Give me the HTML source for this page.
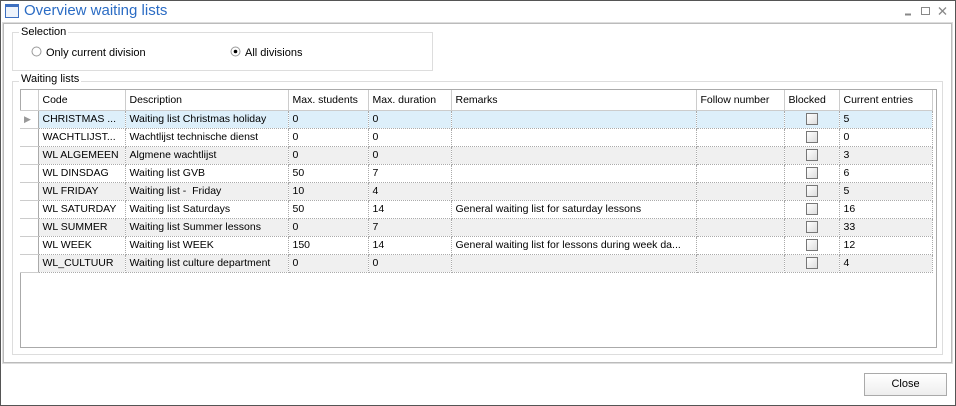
<!DOCTYPE html>
<html><head><style>
*{box-sizing:border-box;margin:0;padding:0}
body{width:956px;height:406px;background:#fff;font-family:"Liberation Sans",sans-serif;font-size:11px;color:#000;position:relative;overflow:hidden}
.win{position:absolute;left:0;top:0;width:956px;height:406px;border:1px solid #555}
.abs{position:absolute;white-space:nowrap}
.title{left:24px;top:2px;font-size:15px;color:#2b6cc4}
.panel{left:3px;top:23px;width:949px;height:340px;border:1px solid #bbb;outline:1px solid #ddd}
.grp{border:1px solid #ddd}
.lbl{background:#fff;padding:0 2px}
table{border-collapse:collapse;table-layout:fixed;position:absolute;left:20px;top:90px;font-size:10.5px}
td{height:18px;border-right:1px dotted #aaa;border-bottom:1px dotted #aaa;padding-left:4px;white-space:nowrap;overflow:hidden}
th{height:20px;font-weight:normal;text-align:left;padding-left:4px;border-right:1px solid #ccc;border-bottom:1px solid #ccc;white-space:nowrap;overflow:hidden}
td.ind{border-right:1px solid #aaa;border-bottom:1px solid #ccc}
tr.alt td{background:#f0f0f0}
tr.alt td.ind, tr td.ind{background:#fff}
tr.sel td{background:#ddeffa}
.cb{display:block;width:12px;height:12px;border:1px solid #777;background:linear-gradient(135deg,#fff,#ddd);margin-left:17px}
</style></head><body>
<div class="win"></div>
<svg class="abs" style="left:5px;top:4px" width="15" height="15"><rect x="0.5" y="0.5" width="13" height="13" fill="#eef3fb" stroke="#3d6fc0"/><rect x="1" y="1" width="12" height="2" fill="#3d6fc0"/></svg>
<div class="abs title">Overview waiting lists</div>
<svg class="abs" style="left:900px;top:4px" width="50" height="14" stroke="#888" fill="none"><line x1="5" y1="10.5" x2="11" y2="10.5" stroke-width="2"/><rect x="21.5" y="3.5" width="8" height="7"/><path d="M39 3.5l7 7M46 3.5l-7 7" stroke-width="1.3"/></svg>
<div class="abs panel"></div>
<div class="abs grp" style="left:12px;top:32px;width:421px;height:39px"></div>
<div class="abs lbl" style="left:19px;top:26px">Selection</div>
<svg class="abs" style="left:31px;top:46px" width="11" height="11"><circle cx="5.5" cy="5.5" r="4.5" fill="#fff" stroke="#999"/></svg>
<div class="abs" style="left:46px;top:47px">Only current division</div>
<svg class="abs" style="left:230px;top:46px" width="11" height="11"><circle cx="5.5" cy="5.5" r="4.5" fill="#fff" stroke="#999"/><circle cx="5.5" cy="5.5" r="1.8" fill="#000"/></svg>
<div class="abs" style="left:245px;top:47px">All divisions</div>
<div class="abs grp" style="left:12px;top:81px;width:931px;height:274px"></div>
<div class="abs lbl" style="left:19px;top:73px">Waiting lists</div>
<div class="abs" style="left:20px;top:89px;width:917px;height:259px;border:1px solid #aaa"></div>
<table>
<colgroup><col style="width:18px"><col style="width:87px"><col style="width:163px"><col style="width:80px"><col style="width:83px"><col style="width:245px"><col style="width:88px"><col style="width:55px"><col style="width:93px"></colgroup>
<tr><th></th><th>Code</th><th>Description</th><th>Max. students</th><th>Max. duration</th><th>Remarks</th><th>Follow number</th><th>Blocked</th><th>Current entries</th></tr>
<tr class="sel"><td class="ind" style="background:#fff;color:#999;font-size:9px">▶</td><td>CHRISTMAS ...</td><td>Waiting list Christmas holiday</td><td>0</td><td>0</td><td></td><td></td><td><span class="cb"></span></td><td>5</td></tr>
<tr><td class="ind"></td><td>WACHTLIJST...</td><td>Wachtlijst technische dienst</td><td>0</td><td>0</td><td></td><td></td><td><span class="cb"></span></td><td>0</td></tr>
<tr class="alt"><td class="ind"></td><td>WL ALGEMEEN</td><td>Algmene wachtlijst</td><td>0</td><td>0</td><td></td><td></td><td><span class="cb"></span></td><td>3</td></tr>
<tr><td class="ind"></td><td>WL DINSDAG</td><td>Waiting list GVB</td><td>50</td><td>7</td><td></td><td></td><td><span class="cb"></span></td><td>6</td></tr>
<tr class="alt"><td class="ind"></td><td>WL FRIDAY</td><td>Waiting list - &nbsp;Friday</td><td>10</td><td>4</td><td></td><td></td><td><span class="cb"></span></td><td>5</td></tr>
<tr><td class="ind"></td><td>WL SATURDAY</td><td>Waiting list Saturdays</td><td>50</td><td>14</td><td>General waiting list for saturday lessons</td><td></td><td><span class="cb"></span></td><td>16</td></tr>
<tr class="alt"><td class="ind"></td><td>WL SUMMER</td><td>Waiting list Summer lessons</td><td>0</td><td>7</td><td></td><td></td><td><span class="cb"></span></td><td>33</td></tr>
<tr><td class="ind"></td><td>WL WEEK</td><td>Waiting list WEEK</td><td>150</td><td>14</td><td>General waiting list for lessons during week da...</td><td></td><td><span class="cb"></span></td><td>12</td></tr>
<tr class="alt"><td class="ind"></td><td>WL_CULTUUR</td><td>Waiting list culture department</td><td>0</td><td>0</td><td></td><td></td><td><span class="cb"></span></td><td>4</td></tr>
</table>
<div class="abs" style="left:864px;top:373px;width:83px;height:23px;border:1px solid #aaa;background:linear-gradient(#fff,#eee);text-align:center;line-height:21px">Close</div>
</body></html>
